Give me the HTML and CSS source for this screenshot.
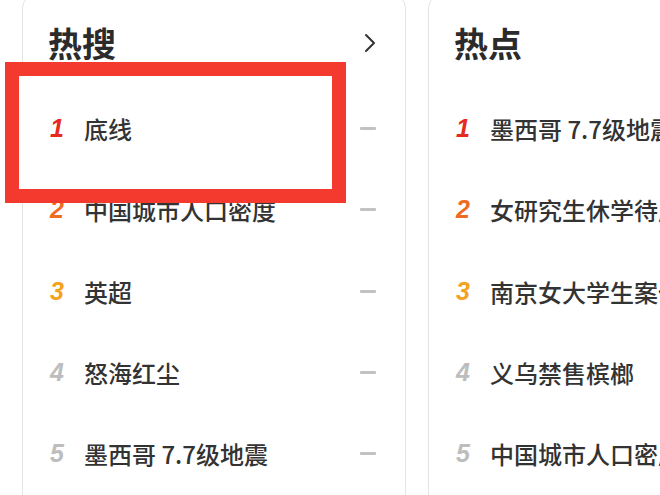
FILE: index.html
```html
<!DOCTYPE html>
<html lang="zh-CN">
<head>
<meta charset="utf-8">
<link rel="stylesheet" href="styles.css">
</head>
<body>
<div class="board">
  <section class="card">
    <div class="card-head">
      <h2 class="card-title">热搜</h2>
      <svg class="chev" width="12" height="20" viewBox="0 0 12 20"><polyline points="2,2 10,10 2,18" fill="none" stroke="#333" stroke-width="2" stroke-linecap="round" stroke-linejoin="round"/></svg>
    </div>
    <ol class="list">
      <li class="row row-top"><span class="num n1">1</span><span class="txt">底线</span><span class="dash"></span></li>
      <li class="row"><span class="num n2">2</span><span class="txt">中国城市人口密度</span><span class="dash"></span></li>
      <li class="row"><span class="num n3">3</span><span class="txt">英超</span><span class="dash"></span></li>
      <li class="row"><span class="num n4">4</span><span class="txt">怒海红尘</span><span class="dash"></span></li>
      <li class="row"><span class="num n4">5</span><span class="txt">墨西哥 7.7级地震</span><span class="dash"></span></li>
    </ol>
  </section>
  <section class="card">
    <div class="card-head">
      <h2 class="card-title">热点</h2>
    </div>
    <ol class="list">
      <li class="row"><span class="num n1">1</span><span class="txt">墨西哥 7.7级地震</span></li>
      <li class="row"><span class="num n2">2</span><span class="txt">女研究生休学待产</span></li>
      <li class="row"><span class="num n3">3</span><span class="txt">南京女大学生案件</span></li>
      <li class="row"><span class="num n4">4</span><span class="txt">义乌禁售槟榔</span></li>
      <li class="row"><span class="num n4">5</span><span class="txt">中国城市人口密度</span></li>
    </ol>
  </section>
</div>
<div class="highlight"></div>
</body>
</html>
```
FILE: styles.css
```css
html, body {
  margin: 0;
  padding: 0;
  background: #ffffff;
  overflow: hidden;
  width: 660px;
  height: 495px;
}
body {
  position: relative;
  font-family: "Noto Sans CJK SC", "Noto Sans", sans-serif;
  color: #333;
}
.board {
  display: flex;
  gap: 22px;
  margin-top: -6px;
  padding-left: 22px;
}
.card {
  flex: 0 0 384px;
  box-sizing: border-box;
  height: 540px;
  border: 1px solid #e4e4e4;
  border-radius: 14px;
  background: #fff;
  padding: 14px 29px 0 27px;
}
.card-head {
  height: 68px;
  display: flex;
  align-items: center;
  justify-content: space-between;
}
.card-title {
  margin: 0 0 0 -2px;
  font-size: 34px;
  font-weight: 700;
  color: #2b2b2b;
  line-height: 1;
}
.list {
  list-style: none;
  margin: 11px 0 0;
  padding: 0;
}
.row {
  height: 81.25px;
  display: flex;
  align-items: center;
  white-space: nowrap;
}
.row-top {
  position: relative;
  z-index: 2;
}
.num {
  width: 34px;
  flex: 0 0 34px;
  font-family: "Liberation Sans", Arial, sans-serif;
  font-style: italic;
  font-weight: 700;
  font-size: 25px;
}
.n1 { color: #e62a1e; }
.n2 { color: #f06b22; }
.n3 { color: #f5a21e; }
.n4 { color: #bdbdbd; }
.txt {
  flex: 1;
  font-size: 24px;
  font-weight: 500;
  color: #333;
}
.dash {
  width: 16px;
  height: 3px;
  background: #c2c2c2;
  border-radius: 1px;
}
.highlight {
  position: absolute;
  left: 5px;
  top: 62px;
  width: 341px;
  height: 141px;
  box-sizing: border-box;
  border: 14px solid #f43a2e;
  background: #fff;
  z-index: 1;
}
```
